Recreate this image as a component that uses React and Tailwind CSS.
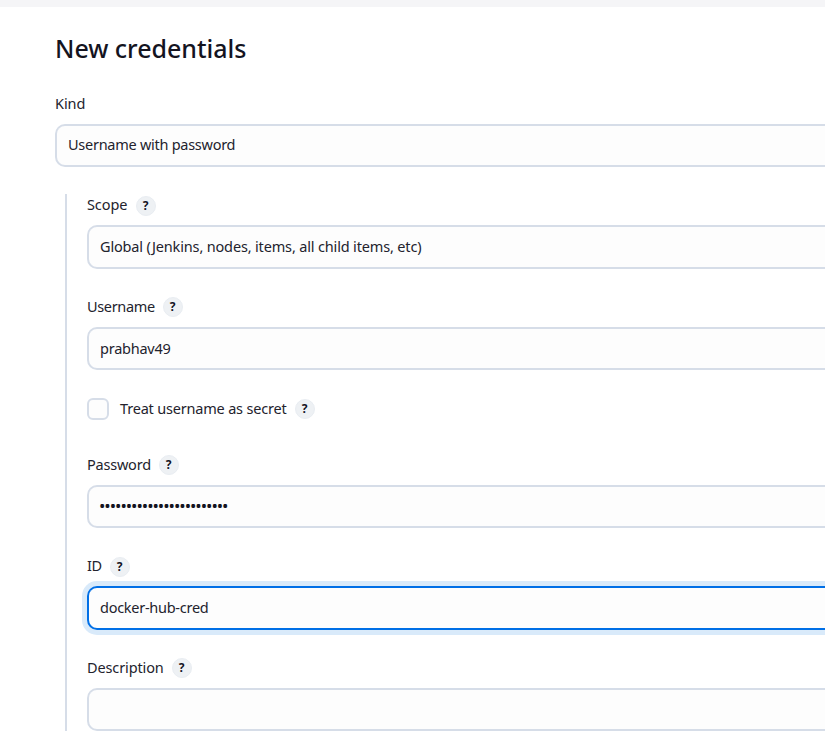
import React from "react";

function Help() {
  return (
    <span className="flex h-5 w-5 shrink-0 items-center justify-center rounded-full border border-[#e9edf2] bg-[#eef1f4] pr-px text-[12px] leading-none font-bold text-[#14141f]">
      ?
    </span>
  );
}

function Label({ children, width, tracking, shift = "pb-[2px]" }) {
  return (
    <div className="flex h-5 items-center">
      <span className={`shrink-0 whitespace-nowrap ${shift} ${width} ${tracking}`}>{children}</span>
      <Help />
    </div>
  );
}

function Box({ children, className = "h-[43px] border-[#d6dde8] pb-[2px]" }) {
  return (
    <div className={`flex items-center rounded-l-[10px] border-2 border-r-0 bg-[#fdfdfd] pl-[11px] whitespace-nowrap ${className}`}>
      {children}
    </div>
  );
}

export default function App() {
  return (
    <div className="h-[739px] w-full overflow-hidden bg-white font-['Noto_Sans',sans-serif] text-[14.5px] leading-5 text-[#23232d]">
      <div className="h-[7px] bg-[#f5f5f7]" />
      <main className="pl-[55px]">
        <h1 className="pt-[24px] text-[25px] leading-[34px] font-medium tracking-[-0.02px] text-[#14141f]">New credentials</h1>
        <div className="mt-[28px] h-5">
          <span className="tracking-[-0.1px]">Kind</span>
        </div>
        <div className="mt-[11px]">
          <Box className="h-[43px] border-[#d6dde8] pb-[4px]">
            <span className="tracking-[-0.27px]">Username with password</span>
          </Box>
        </div>
        <section className="mt-[27px] ml-[10px] h-[537px] border-l-2 border-[#d6dde8] pt-[2px] pl-5">
          <Label width="w-[49px]" tracking="tracking-[-0.1px]" shift="pb-[4px]">Scope</Label>
          <div className="mt-[9px]">
            <Box className="h-[44px] border-[#d6dde8] pb-[2px]">
              <span className="tracking-[-0.16px]">Global (Jenkins, nodes, items, all child items, etc)</span>
            </Box>
          </div>
          <div className="mt-[28px]">
            <Label width="w-[76px]" tracking="tracking-[-0.34px]">Username</Label>
          </div>
          <div className="mt-[10px]">
            <Box>
              <span className="tracking-[-0.24px]">prabhav49</span>
            </Box>
          </div>
          <div className="mt-[28px] flex h-[22px] items-center">
            <span className="mr-[11px] h-[22px] w-[22px] shrink-0 rounded-[6px] border-2 border-[#d6dde8] bg-[#fdfdfd]" />
            <Label width="w-[175px]" tracking="tracking-[-0.19px]">Treat username as secret</Label>
          </div>
          <div className="mt-[35px]">
            <Label width="w-[72px]" tracking="tracking-[-0.22px]">Password</Label>
          </div>
          <div className="mt-[10px]">
            <Box>
              <span className="-ml-px text-[17px] tracking-[-1.04px] text-[#14141f]">••••••••••••••••••••••••</span>
            </Box>
          </div>
          <div className="mt-[29px]">
            <Label width="w-[23px]" tracking="tracking-[-0.5px]" shift="pb-[4px]">ID</Label>
          </div>
          <div className="mt-[9px]">
            <Box className="h-[44px] border-[#006fe6] pb-[2px] shadow-[0_0_0_5px_#d9eafa]">
              <span className="tracking-[-0.27px]">docker-hub-cred</span>
            </Box>
          </div>
          <div className="mt-[28px]">
            <Label width="w-[85px]" tracking="tracking-[-0.12px]">Description</Label>
          </div>
          <div className="mt-[10px]">
            <Box />
          </div>
        </section>
      </main>
    </div>
  );
}
